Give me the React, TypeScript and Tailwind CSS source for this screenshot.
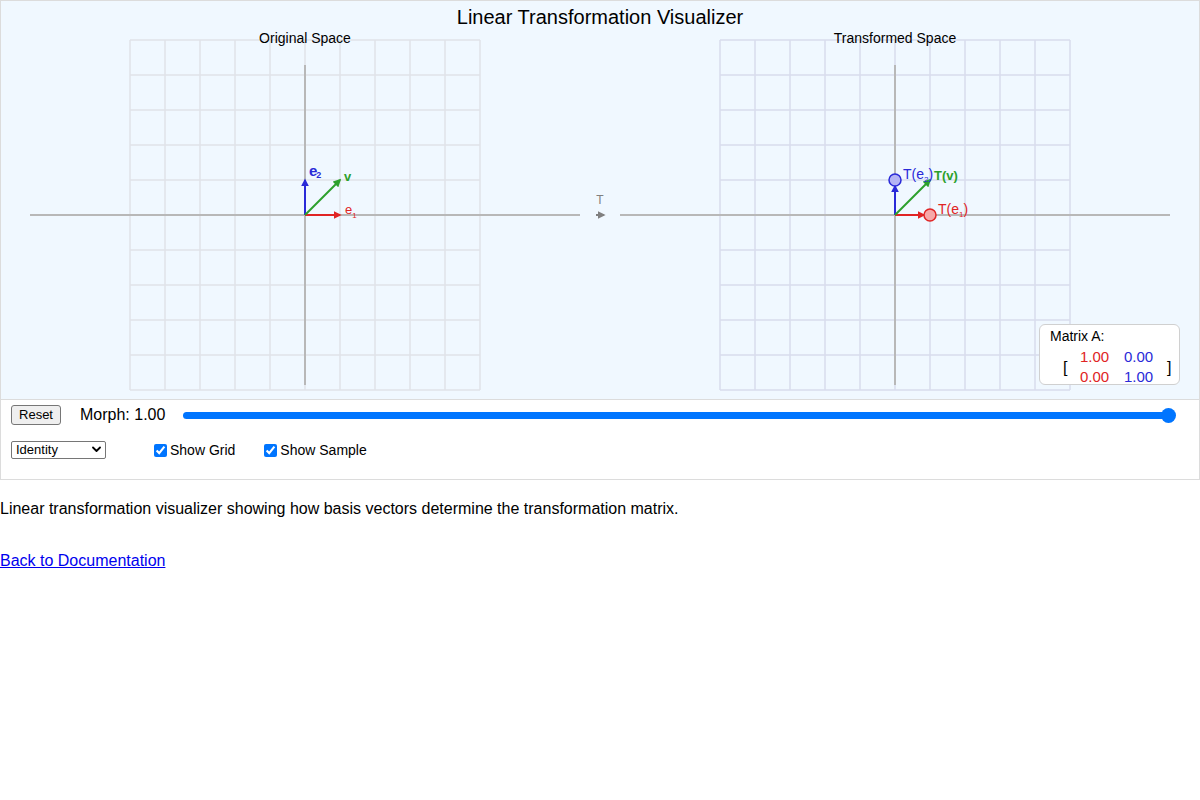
import React from "react";

const F = { fontFamily: '"Liberation Sans", Arial, sans-serif' };

function Grid({ x0, stroke }: { x0: number; stroke: string }) {
  const lines: React.ReactNode[] = [];
  for (let i = 0; i <= 10; i++) {
    const x = x0 + i * 35;
    lines.push(<line key={"v" + i} x1={x} y1={40} x2={x} y2={390} stroke={stroke} strokeWidth={1.5} />);
    const y = 40 + i * 35;
    lines.push(<line key={"h" + i} x1={x0} y1={y} x2={x0 + 350} y2={y} stroke={stroke} strokeWidth={1.5} />);
  }
  return <g>{lines}</g>;
}

export default function App() {
  return (
    <div className="w-[1200px] bg-white text-black" style={F}>
      <div className="relative h-[400px] border border-[#dcdcdc] bg-[#f0f8ff]">
        <svg width={1198} height={398} viewBox="1 1 1198 398" className="block">
          <defs>
            <marker id="ar" viewBox="0 0 10 10" refX="8" refY="5" markerWidth="4" markerHeight="4" orient="auto">
              <path d="M0,0 L10,5 L0,10 z" fill="#e02424" />
            </marker>
            <marker id="ab" viewBox="0 0 10 10" refX="8" refY="5" markerWidth="4" markerHeight="4" orient="auto">
              <path d="M0,0 L10,5 L0,10 z" fill="#2a2ad8" />
            </marker>
            <marker id="ag" viewBox="0 0 10 10" refX="8" refY="5" markerWidth="4" markerHeight="4" orient="auto">
              <path d="M0,0 L10,5 L0,10 z" fill="#2ca02c" />
            </marker>
            <marker id="ay" viewBox="0 0 10 10" refX="8" refY="5" markerWidth="4" markerHeight="4" orient="auto">
              <path d="M0,0 L10,5 L0,10 z" fill="#808080" />
            </marker>
          </defs>

          <text x={600} y={24} textAnchor="middle" fontSize={20} fill="#000" style={F}>
            Linear Transformation Visualizer
          </text>

          {/* Left space */}
          <Grid x0={130} stroke="#e0e3e8" />
          <text x={305} y={43} textAnchor="middle" fontSize={14} fill="#000" style={F}>
            Original Space
          </text>
          <line x1={30} y1={215} x2={580} y2={215} stroke="#b8b8b8" strokeWidth={2} />
          <line x1={305} y1={65} x2={305} y2={385} stroke="#b8b8b8" strokeWidth={2} />

          <line x1={305} y1={215} x2={340} y2={215} stroke="#e02424" strokeWidth={2} markerEnd="url(#ar)" />
          <line x1={305} y1={215} x2={305} y2={180} stroke="#2a2ad8" strokeWidth={2} markerEnd="url(#ab)" />
          <line x1={305} y1={215} x2={340} y2={180} stroke="#2ca02c" strokeWidth={2} markerEnd="url(#ag)" />

          <text x={345} y={214} fontSize={13} fill="#e02424" style={F}>
            e<tspan fontSize={8} dy={4}>1</tspan>
          </text>
          <text x={309} y={176} fontSize={15} fontWeight="bold" fill="#2a2ad8" style={F}>
            e<tspan fontSize={9} dy={2} dx={-1}>2</tspan>
          </text>
          <text x={344} y={181} fontSize={13} fontWeight="bold" fill="#2ca02c" style={F}>
            v
          </text>

          {/* Middle arrow */}
          <text x={600} y={204} textAnchor="middle" fontSize={12} fill="#808080" style={F}>
            T
          </text>
          <line x1={596} y1={215} x2={604} y2={215} stroke="#808080" strokeWidth={2} markerEnd="url(#ay)" />

          {/* Right space */}
          <Grid x0={720} stroke="#d9ddec" />
          <text x={895} y={43} textAnchor="middle" fontSize={14} fill="#000" style={F}>
            Transformed Space
          </text>
          <line x1={620} y1={215} x2={1170} y2={215} stroke="#b8b8b8" strokeWidth={2} />
          <line x1={895} y1={65} x2={895} y2={385} stroke="#b8b8b8" strokeWidth={2} />

          <line x1={895} y1={215} x2={924} y2={215} stroke="#e02424" strokeWidth={2} markerEnd="url(#ar)" />
          <line x1={895} y1={215} x2={895} y2={186} stroke="#2a2ad8" strokeWidth={2} markerEnd="url(#ab)" />
          <line x1={895} y1={215} x2={930} y2={180} stroke="#2ca02c" strokeWidth={2} markerEnd="url(#ag)" />
          <circle cx={930} cy={215} r={6} fill="#f7a8a8" stroke="#e02424" strokeWidth={1.5} />
          <circle cx={895} cy={180} r={6} fill="#b4b4f4" stroke="#2a2ad8" strokeWidth={1.5} />

          <text x={938} y={214} fontSize={14} fill="#e02424" style={F}>
            T(e<tspan fontSize={8} dy={3}>1</tspan>
            <tspan dy={-3}>)</tspan>
          </text>
          <text x={903} y={179} fontSize={14} fill="#2a2ad8" style={F}>
            T(e<tspan fontSize={8} dy={3}>2</tspan>
            <tspan dy={-3}>)</tspan>
          </text>
          <text x={934} y={180} fontSize={13} fontWeight="bold" fill="#2ca02c" style={F}>
            T(v)
          </text>
        </svg>

        <div className="absolute right-[19px] bottom-[14px] w-[141px] h-[61px] rounded-[6px] border border-[#d0d0d0] bg-white pl-[10px] pt-[2px]">
          <div className="text-[14px] leading-[18px]">Matrix A:</div>
          <div className="flex items-center mt-[2px]">
            <span className="text-[16px] mt-[2px] ml-[13px] w-[17px]">[</span>
            <div className="grid grid-cols-[44px_44px] text-[15px] leading-[20px]">
              <span className="text-[#e02424]">1.00</span>
              <span className="text-[#2a2ad8]">0.00</span>
              <span className="text-[#e02424]">0.00</span>
              <span className="text-[#2a2ad8]">1.00</span>
            </div>
            <span className="text-[16px] mt-[2px] ml-[-1px]">]</span>
          </div>
        </div>
      </div>

      <div className="h-[80px] border border-t-0 border-[#dcdcdc] px-[10px] pt-[5px]">
        <div className="flex items-center h-[20px]">
          <button className="h-[20px] w-[50px] rounded-[3px] border border-[#767676] bg-[#efefef] text-[13px] leading-[18px] text-black">
            Reset
          </button>
          <span className="ml-[19px] text-[16px] leading-[18px]">Morph: 1.00</span>
          <div className="flex flex-1 items-center ml-[18px] mr-[13px] h-[16px]">
            <div className="flex-1 h-[7px] rounded-full bg-[#0075ff]" />
            <div className="w-[15px] h-[15px] rounded-full bg-[#0075ff] ml-[-9px]" />
          </div>
        </div>
        <div className="flex items-center h-[18px] mt-[16px]">
          <div className="relative">
            <select
              defaultValue="Identity"
              className="appearance-none block h-[18px] w-[95px] rounded-[2px] border border-[#767676] bg-white pl-[4px] text-[13px] leading-[16px] text-black"
            >
              <option>Identity</option>
              <option>Rotation</option>
              <option>Shear</option>
              <option>Scale</option>
            </select>
            <svg className="pointer-events-none absolute right-[5px] top-[5px]" width="9" height="7" viewBox="0 0 9 7">
              <path d="M1 1.5 L4.5 5 L8 1.5" fill="none" stroke="#000" strokeWidth="1.8" strokeLinecap="round" strokeLinejoin="round" />
            </svg>
          </div>
          <label className="ml-[44px] flex items-center text-[14px]">
            <input type="checkbox" defaultChecked className="ml-[4px] mr-[3px] w-[13px] h-[13px] accent-[#0075ff]" />
            Show Grid
          </label>
          <label className="ml-[25px] flex items-center text-[14px]">
            <input type="checkbox" defaultChecked className="ml-[4px] mr-[3px] w-[13px] h-[13px] accent-[#0075ff]" />
            Show Sample
          </label>
        </div>
      </div>

      <p className="mt-[20px] text-[16px] leading-[18px]">
        Linear transformation visualizer showing how basis vectors determine the transformation matrix.
      </p>
      <p className="mt-[34px] text-[16px] leading-[18px]">
        <a href="#" className="text-[#0000ee] underline">
          Back to Documentation
        </a>
      </p>
    </div>
  );
}
